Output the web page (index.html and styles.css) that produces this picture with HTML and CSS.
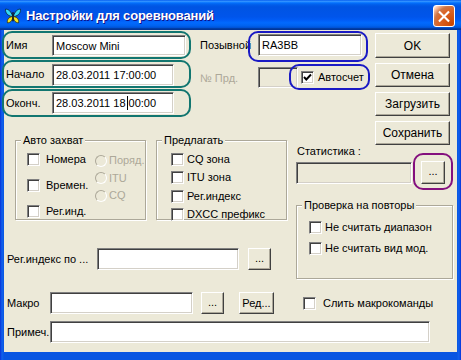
FILE: index.html
```html
<!DOCTYPE html>
<html lang="ru">
<head>
    <meta charset="UTF-8">
    <title>Настройки для соревнований</title>
    <link rel="stylesheet" href="styles.css">
</head>
<body>
    <div class="window">
        <div class="titlebar">
            <svg class="appicon" width="16" height="16" viewBox="0 0 16 16">
                <path d="M7.5 8C6.2 3.6 3.4 0.8 0.5 1.2 0.2 4.6 2.2 7.6 7 8.6Z" fill="#34d8f6" stroke="#0d2a44" stroke-width="0.9"/>
                <path d="M8.5 8C9.8 3.6 12.6 0.8 15.5 1.2 15.8 4.6 13.8 7.6 9 8.6Z" fill="#34d8f6" stroke="#0d2a44" stroke-width="0.9"/>
                <path d="M7.2 8.6C4 9 1.8 11.6 2.4 14.8 5.2 15 7.2 12.6 7.9 9.4Z" fill="#f6e61e" stroke="#3a3410" stroke-width="0.9"/>
                <path d="M8.8 8.6C12 9 14.2 11.6 13.6 14.8 10.8 15 8.8 12.6 8.1 9.4Z" fill="#f6e61e" stroke="#3a3410" stroke-width="0.9"/>
                <rect x="7.3" y="4" width="1.4" height="9.5" rx="0.7" fill="#151515"/>
            </svg>
            <span class="title">Настройки для соревнований</span>
            <span class="close">
                <svg width="21" height="21" viewBox="0 0 21 21">
                    <path d="M6 6L15 15M15 6L6 15" stroke="#fff" stroke-width="2.2" stroke-linecap="square"/>
                </svg>
            </span>
        </div>

        <div class="client">
            <div class="fields">
                <div class="frow">
                    <div class="fcell ring-teal">
                        <span class="flabel">Имя</span>
                        <div class="edit w-name">Moscow Mini</div>
                    </div>
                    <div class="mcell">
                        <span class="mlabel">Позывной</span>
                        <div class="ring-blue ring-call">
                            <div class="edit w-call">RA3BB</div>
                        </div>
                    </div>
                </div>
                <div class="frow">
                    <div class="fcell ring-teal">
                        <span class="flabel">Начало</span>
                        <div class="edit w-date">28.03.2011 17:00:00</div>
                    </div>
                    <div class="mcell mcell-low">
                        <span class="mlabel off-text">№ Прд.</span>
                        <div class="edit off w-nr"></div>
                        <div class="ring-blue ring-auto">
                            <label class="opt gap4"><span class="chk checked"><svg width="9" height="9" viewBox="0 0 9 9"><path d="M1 4L3.3 6.5L8 1.5" fill="none" stroke="#000" stroke-width="1.9"/></svg></span>Автосчет</label>
                        </div>
                    </div>
                </div>
                <div class="frow">
                    <div class="fcell ring-teal">
                        <span class="flabel">Оконч.</span>
                        <div class="edit w-date">28.03.2011 18<span class="caret"></span>00:00</div>
                    </div>
                </div>
            </div>

            <div class="buttons">
                <div class="btn btn-ok">OK</div>
                <div class="btn">Отмена</div>
                <div class="btn">Загрузить</div>
                <div class="btn">Сохранить</div>
            </div>

            <div class="groups">
                <fieldset class="group">
                    <legend>Авто захват</legend>
                    <div class="gcols">
                        <div class="col-a">
                            <label class="opt gap6"><span class="chk"></span>Номера</label>
                            <label class="opt gap6"><span class="chk"></span>Времен.</label>
                            <label class="opt gap6"><span class="chk"></span>Рег.инд.</label>
                        </div>
                        <div class="col-b">
                            <label class="opt gap2 off-text"><span class="radio"></span>Поряд.</label>
                            <label class="opt gap2 off-text"><span class="radio"></span>ITU</label>
                            <label class="opt gap2 off-text"><span class="radio"></span>CQ</label>
                        </div>
                    </div>
                </fieldset>
                <fieldset class="group">
                    <legend>Предлагать</legend>
                    <div class="offer">
                        <label class="opt gap3"><span class="chk"></span>CQ зона</label>
                        <label class="opt gap3"><span class="chk"></span>ITU зона</label>
                        <label class="opt gap3"><span class="chk"></span>Рег.индекс</label>
                        <label class="opt gap3"><span class="chk"></span>DXCC префикс</label>
                    </div>
                </fieldset>
            </div>

            <div class="stat">
                <div class="stat-label">Статистика :</div>
                <div class="stat-row">
                    <div class="edit off w-stat"></div>
                    <div class="ring-purple">
                        <div class="btn btn-dots">...</div>
                    </div>
                </div>
                <fieldset class="group group-dup">
                    <legend>Проверка на повторы</legend>
                    <div class="dup">
                        <label class="opt gap3"><span class="chk"></span>Не считать диапазон</label>
                        <label class="opt gap3"><span class="chk"></span>Не считать вид мод.</label>
                    </div>
                </fieldset>
            </div>

            <div class="regrow">
                <span class="lbl-reg">Рег.индекс по ...</span>
                <div class="edit w-reg"></div>
                <div class="btn btn-dots btn-reg">...</div>
            </div>

            <div class="macrow">
                <span class="lbl-short">Макро</span>
                <div class="edit w-macro"></div>
                <div class="btn btn-dots btn-macro">...</div>
                <div class="btn btn-edit">Ред...</div>
                <label class="opt gap7 merge"><span class="chk"></span>Слить макрокоманды</label>
            </div>

            <div class="noterow">
                <span class="lbl-short">Примеч.</span>
                <div class="edit w-note"></div>
            </div>
        </div>
    </div>
</body>
</html>
```

FILE: styles.css
```css
*{
    margin: 0;
    padding: 0;
    box-sizing: border-box;
}
body{
    font-family: "Liberation Sans", Arial, sans-serif;
    font-size: 11px;
    color: #000;
    background-color: #0b55e6;
}
.window{
    width: 461px;
    height: 360px;
    display: flex;
    flex-direction: column;
    background: linear-gradient(to right, #0831d9 0, #1161ec 2px, #0855e2 4px, #0855e2 457px, #1161ec 459px, #0831d9 461px);
    overflow: hidden;
}

/* title bar */
.titlebar{
    height: 30px;
    flex: none;
    display: flex;
    align-items: center;
    padding: 0 6px 0 5px;
    background: linear-gradient(180deg, #0058ee 0%, #3593ff 4%, #288eff 6%, #127dff 8%, #036ffc 10%, #0262ee 14%, #0057e5 20%, #0054e3 24%, #0055eb 56%, #005bf5 66%, #026afe 76%, #0062ef 86%, #0052d6 92%, #0040ab 94%, #003092 100%);
}
.appicon{
    flex: none;
    margin-top: 1px;
}
.title{
    margin-left: 5px;
    color: #fff;
    font-weight: bold;
    font-size: 13px;
    letter-spacing: -0.2px;
    text-shadow: 1px 1px #0f1089;
}
.close{
    margin-left: auto;
    margin-top: 2px;
    width: 22px;
    height: 22px;
    display: flex;
    align-items: center;
    justify-content: center;
    border: 1px solid #fff;
    border-radius: 3px;
    background: radial-gradient(circle at 90% 90%, #cc4600 0%, #dc6527 55%, #cd7546 70%, #ffccb2 90%, #fff 100%);
}

/* client area */
.client{
    margin: 0 4px;
    height: 322px;
    background-color: #ece9d8;
    display: grid;
    grid-template-columns: 288px 78px 87px;
    grid-template-rows: 87px 28px 80px 55px 37px 35px;
}
.off-text{
    color: #aca899;
}

/* edit boxes, buttons, checks */
.edit{
    height: 22px;
    flex: none;
    display: flex;
    align-items: center;
    padding-left: 3px;
    white-space: nowrap;
    overflow: hidden;
    background-color: #fff;
    border: 1px solid;
    border-color: #808080 #fff #fff #808080;
    box-shadow: inset 1px 1px #404040, inset -1px -1px #d4d0c8;
}
.edit.off{
    background-color: #ece9d8;
}
.caret{
    display: inline-block;
    width: 1px;
    height: 14px;
    margin: 0 1px;
    background-color: #000;
}
.btn{
    flex: none;
    display: flex;
    align-items: center;
    justify-content: center;
    width: 75px;
    height: 24px;
    background-color: #ece9d8;
    border: 1px solid;
    border-color: #fff #404040 #404040 #fff;
    box-shadow: inset -1px -1px #aca899;
    font-size: 12px;
}
.btn-ok{
    height: 25px;
}
.btn-dots{
    width: 24px;
    height: 23px;
    font-size: 11px;
    padding-bottom: 3px;
}
.opt{
    display: flex;
    align-items: center;
    height: 13px;
    line-height: 13px;
    white-space: nowrap;
}
.gap2{ gap: 2px; }
.gap3{ gap: 3px; }
.gap4{ gap: 4px; }
.gap6{ gap: 6px; }
.gap7{ gap: 7px; }
.chk{
    width: 13px;
    height: 13px;
    flex: none;
    display: flex;
    align-items: center;
    justify-content: center;
    background-color: #fff;
    border: 1px solid;
    border-color: #808080 #fff #fff #808080;
    box-shadow: inset 1px 1px #404040, inset -1px -1px #d4d0c8;
}
.radio{
    width: 12px;
    height: 12px;
    flex: none;
    border-radius: 50%;
    border: 1px solid;
    border-color: #aca899 #fff #fff #aca899;
    background-color: #ece9d8;
}

/* marked rings drawn on the screenshot */
.ring-teal, .ring-blue, .ring-purple{
    position: relative;
}
.ring-teal::after, .ring-blue::after, .ring-purple::after{
    content: "";
    position: absolute;
    border: 2px solid;
    border-radius: 10px;
    pointer-events: none;
}
.ring-teal::after{
    border-color: #127670;
    left: -2px;
    top: 1px;
    right: 1px;
    bottom: 0;
}
.ring-blue::after{
    border-color: #1a1ac4;
}
.ring-call::after{
    left: -10px;
    top: -3px;
    right: -6px;
    bottom: -6px;
}
.ring-auto::after{
    left: -12px;
    top: -7px;
    right: -6px;
    bottom: -6px;
}
.ring-purple::after{
    border-color: #84107e;
    left: -8px;
    top: -8px;
    right: -8px;
    bottom: -6px;
}

/* top fields */
.fields{
    grid-column: 1 / 3;
    grid-row: 1;
}
.frow{
    height: 29px;
    display: flex;
    align-items: center;
}
.fcell{
    width: 188px;
    height: 29px;
    display: flex;
    align-items: center;
    padding-left: 2px;
}
.flabel{
    width: 46px;
}
.w-name{
    width: 134px;
    height: 21px;
    margin-top: 2px;
}
.w-date{
    width: 122px;
}
.frow:nth-child(2) .w-date{
    margin-top: 3px;
}
.mcell{
    display: flex;
    align-items: center;
    padding-left: 8px;
}
.mcell-low{
    padding-top: 8px;
}
.mlabel{
    width: 58px;
}
.w-call{
    width: 104px;
}
.w-nr{
    width: 40px;
    height: 21px;
}
.ring-auto{
    margin-left: 3px;
}

/* right buttons */
.buttons{
    grid-column: 3;
    grid-row: 1 / 3;
    display: flex;
    flex-direction: column;
    gap: 5px;
    padding: 3px 0 0 5px;
}

/* group boxes */
.groups{
    grid-column: 1;
    grid-row: 2 / 4;
    display: flex;
    gap: 10px;
    padding: 17px 0 0 11px;
}
.group{
    width: 131px;
    height: 86px;
    min-width: 0;
    border: 1px solid #aca899;
    box-shadow: inset 1px 1px #fff, 1px 1px #fff;
}
.group legend{
    margin-left: 5px;
    padding: 0 2px;
    line-height: 13px;
    background-color: #ece9d8;
}
.gcols{
    display: flex;
    padding: 6px 0 0 11px;
}
.col-a{
    width: 68px;
    display: flex;
    flex-direction: column;
    gap: 13px;
}
.col-b{
    display: flex;
    flex-direction: column;
    gap: 4.5px;
    padding-top: 1px;
}
.offer{
    display: flex;
    flex-direction: column;
    gap: 5.3px;
    padding: 6px 0 0 14px;
}

/* statistics */
.stat{
    grid-column: 2 / 4;
    grid-row: 3 / 5;
    padding-left: 4px;
}
.stat-label{
    line-height: 13px;
    padding-left: 1px;
}
.stat-row{
    display: flex;
    align-items: flex-start;
    margin-top: 3px;
}
.w-stat{
    width: 116px;
    margin-top: 1px;
}
.stat-row .ring-purple{
    margin-left: 9px;
}
.group-dup{
    width: 157px;
    height: 80px;
    margin-top: 15px;
}
.dup{
    display: flex;
    flex-direction: column;
    gap: 8px;
    padding: 9px 0 0 12px;
}

/* lower rows */
.regrow{
    grid-column: 1;
    grid-row: 4;
    display: flex;
    align-items: center;
    align-self: start;
    padding: 23px 0 0 3px;
}
.lbl-reg{
    width: 90px;
}
.w-reg{
    width: 142px;
}
.btn-reg{
    margin-left: 9px;
    width: 23px;
    height: 22px;
}
.macrow{
    grid-column: 1 / 4;
    grid-row: 5;
    display: flex;
    align-items: center;
    align-self: start;
    padding: 12px 0 0 3px;
}
.lbl-short{
    width: 43px;
}
.w-macro{
    width: 143px;
}
.btn-macro{
    margin-left: 8px;
    width: 23px;
    height: 22px;
}
.btn-edit{
    margin-left: 15px;
    width: 35px;
    height: 22px;
    font-size: 11px;
}
.merge{
    margin-left: 29px;
}
.noterow{
    grid-column: 1 / 4;
    grid-row: 6;
    display: flex;
    align-items: center;
    align-self: start;
    padding: 4px 0 0 3px;
}
.w-note{
    width: 380px;
}
```
